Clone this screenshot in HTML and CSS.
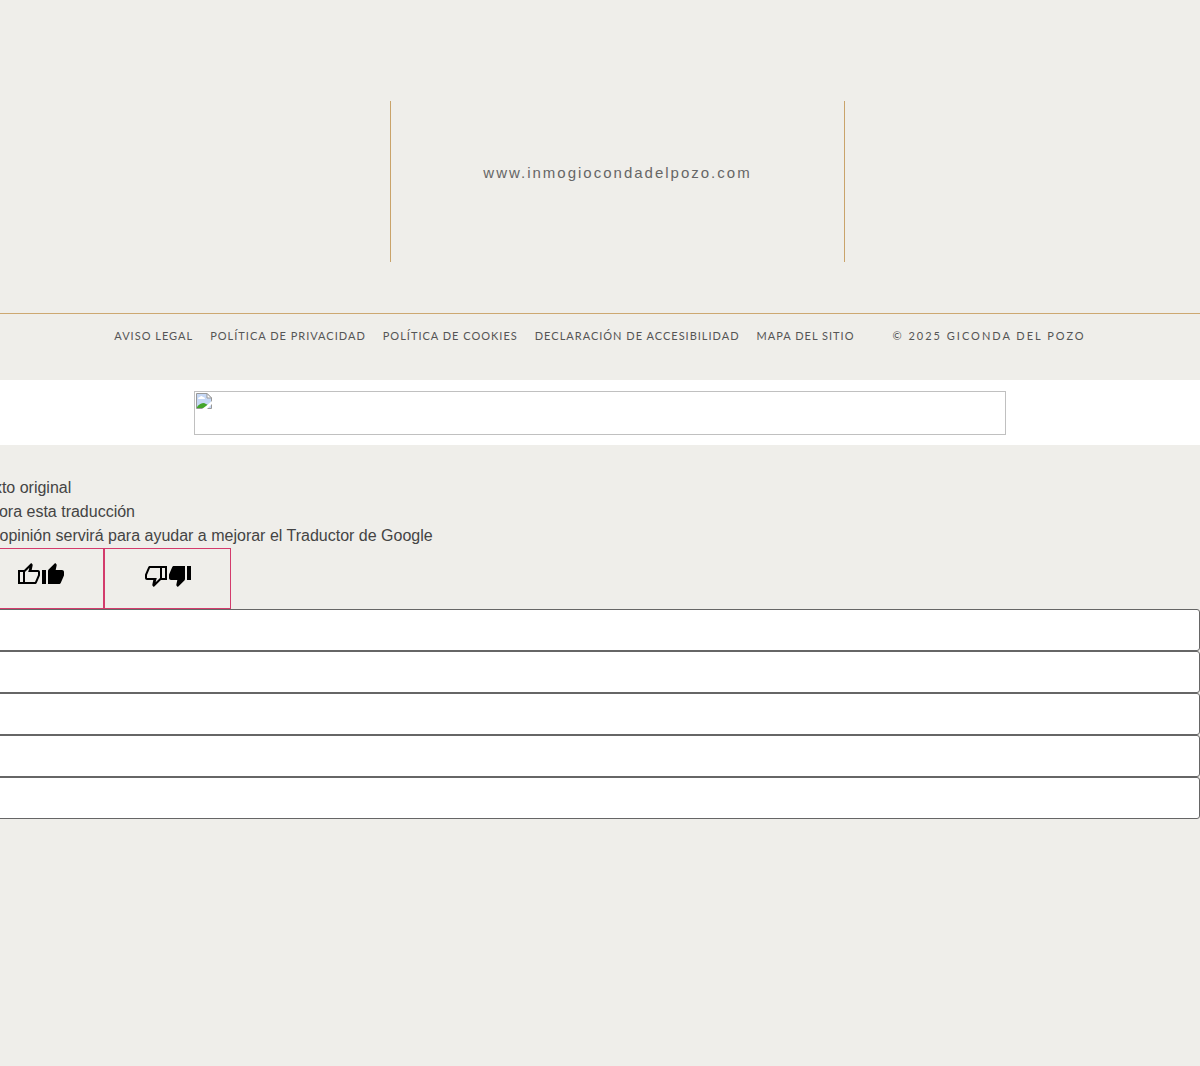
FILE: index.html
```html
<!DOCTYPE html>
<html lang="es">
<head>
<meta charset="utf-8">
<meta name="viewport" content="width=device-width, initial-scale=1">
<title>Gioconda del Pozo</title>
<link rel="stylesheet" href="styles.css">
</head>
<body>
<footer class="footer">
  <div class="contact">
    <div class="contact-site"><a href="#">www.inmogiocondadelpozo.com</a></div>
  </div>
  <div class="legal">
    <nav class="legal-links">
      <a href="#">AVISO LEGAL</a>
      <a href="#">POLÍTICA DE PRIVACIDAD</a>
      <a href="#">POLÍTICA DE COOKIES</a>
      <a href="#">DECLARACIÓN DE ACCESIBILIDAD</a>
      <a href="#">MAPA DEL SITIO</a>
    </nav>
    <p class="copyright">© 2025 GICONDA DEL POZO</p>
  </div>
</footer>
<div class="banner">
  <div class="banner-image">
    <svg width="16" height="16" viewBox="0 0 16 16" aria-hidden="true">
      <path d="M.5 .5H11L15.500 5V15.500H.5z" fill="#c6d8f5" stroke="#999"/>
      <path d="M2 6q0-2 2-2 1-2 3 0 2 0 2 2z" fill="#fff"/>
      <path d="M1 15v-1q3-4 7-4l4 2v3z" fill="#43a52c"/>
      <path d="M11 .5V5h4.500z" fill="#fff" stroke="#999"/>
      <path d="M6 16l4-3 6-5v3l-5 5z" fill="#fff"/>
    </svg>
  </div>
</div>
<section class="translate">
  <div>Texto original</div>
  <div>Valora esta traducción</div>
  <div>Tu opinión servirá para ayudar a mejorar el Traductor de Google</div>
  <form class="feedback">
    <div class="votes">
      <button type="button" class="vote" aria-label="Buena traducción">
        <svg width="24" height="24" viewBox="0 0 24 24" aria-hidden="true"><path fill-rule="evenodd" d="M21 7h-6.310l.95-4.570.03-.32c0-.41-.17-.79-.44-1.060L14.170 0 7.080 7H1v14h17c.83 0 1.540-.5 1.840-1.220l3.020-7.050c.09-.23.14-.47.14-.73V9c0-1.100-.9-2-2-2zM6 19H3V9h3v10zm15-7l-3 7H8V9l4.340-4.340L11.230 9H21v3z"/></svg>
        <svg width="24" height="24" viewBox="0 0 24 24" aria-hidden="true"><path d="M1 7h4v14H1zM23 9c0-1.100-.9-2-2-2h-6.310l.95-4.570.03-.32c0-.41-.17-.79-.44-1.060L14.170 0 7.590 6.590C7.220 6.950 7 7.450 7 8v13h11c.83 0 1.540-.5 1.840-1.220l3.020-7.050c.09-.23.14-.47.14-.73z"/></svg>
      </button>
      <button type="button" class="vote" aria-label="Mala traducción">
        <svg width="24" height="24" viewBox="0 0 24 24" aria-hidden="true"><path fill-rule="evenodd" d="M3 17h6.310l-.95 4.570-.03.320c0 .41.170.79.440 1.060L9.830 24l7.090-7H23V3H6c-.83 0-1.540.5-1.840 1.220l-3.020 7.050c-.09.230-.14.470-.14.730v3c0 1.100.9 2 2 2zM18 5h3v10h-3V5zM3 12l3-7h10v10l-4.340 4.340L12.770 15H3v-3z"/></svg>
        <svg width="24" height="24" viewBox="0 0 24 24" aria-hidden="true"><path d="M23 3h-4v14h4zM1 15c0 1.100.9 2 2 2h6.310l-.95 4.570-.03.320c0 .41.170.79.440 1.060L9.830 24l6.580-6.590c.370-.360.590-.860.590-1.410V3H6c-.83 0-1.540.5-1.840 1.220l-3.020 7.050c-.09.230-.14.470-.14.730z"/></svg>
      </button>
    </div>
    <input class="field" type="text" aria-label="Texto de origen">
    <input class="field" type="text" aria-label="Idioma de origen">
    <input class="field" type="text" aria-label="Texto traducido">
    <input class="field" type="text" aria-label="Idioma de destino">
    <input class="field" type="text" aria-label="Sugerencia">
  </form>
</section>
</body>
</html>
```
FILE: styles.css
```css
* {
  box-sizing: border-box;
}

body {
  margin: 0;
  min-height: 100vh;
  overflow-x: hidden;
  background: #efeeea;
  color: #444;
  font: 16px/24px "Liberation Sans", Arial, sans-serif;
}

a {
  color: inherit;
  text-decoration: none;
}

.contact {
  display: grid;
  grid-template-columns: 390fr 455fr 355fr;
  padding: 101px 0 51px;
}

.contact-site {
  grid-column: 2;
  padding: 60px 0 77px;
  border: solid #c9a36a;
  border-width: 0 1px;
  color: #666;
  font-size: 15px;
  letter-spacing: 2px;
  text-align: center;
}

.legal {
  display: flex;
  flex-wrap: wrap;
  justify-content: center;
  column-gap: 38px;
  padding: 12px 0 34px;
  border-top: 1px solid #cda871;
  color: #555;
  font: 11px/20px Lato, sans-serif;
}

.legal-links {
  display: flex;
  flex-wrap: wrap;
  justify-content: center;
  column-gap: 17px;
  letter-spacing: 1px;
}

.copyright {
  margin: 0;
  letter-spacing: 2px;
}

.banner {
  padding: 11px 10px 10px;
  background: #fff;
}

.banner-image {
  max-width: 812px;
  height: 44px;
  margin: 0 auto;
  padding: 1px;
  border: 1px solid #c0c0c0;
}

.banner-image svg {
  display: block;
}

.translate {
  margin-left: -23px;
  padding-top: 31px;
}

.votes {
  display: flex;
}

.vote {
  display: flex;
  justify-content: center;
  width: 127px;
  height: 61px;
  padding: 14px 0;
  border: 1px solid #d33b6c;
  background: transparent;
}

.field {
  display: block;
  width: 100%;
  height: 42px;
  padding: 8px 16px;
  border: 1px solid #666;
  border-radius: 3px;
  background: #fff;
}
```
